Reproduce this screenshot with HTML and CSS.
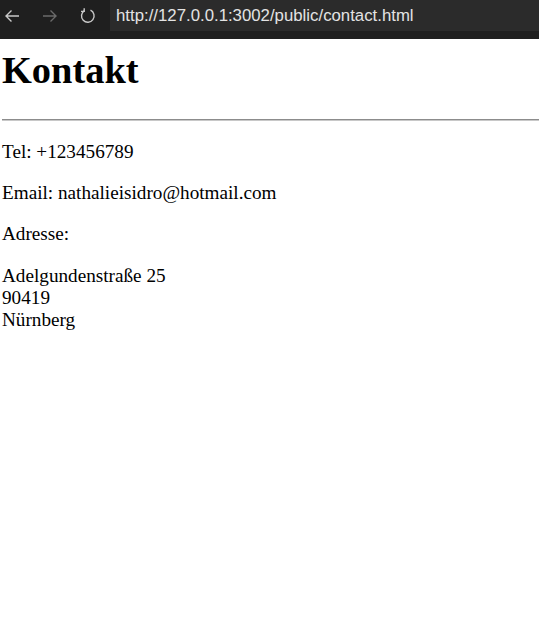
FILE: index.html
```html
<!DOCTYPE html>
<html lang="de">
<head>
<meta charset="utf-8">
<title>Kontakt</title>
<link rel="stylesheet" href="styles.css">
</head>
<body>
<header class="chrome">
  <div class="nav">
    <svg class="icon back" width="18" height="18" viewBox="0 0 18 18"><path d="M16 9H3M8.5 3.5L3 9l5.5 5.5" fill="none" stroke="currentColor" stroke-width="1.4"/></svg>
    <svg class="icon fwd" width="18" height="18" viewBox="0 0 18 18"><path d="M2 9h13M9.5 3.5L15 9l-5.5 5.5" fill="none" stroke="currentColor" stroke-width="1.4"/></svg>
    <svg class="icon reload" width="18" height="18" viewBox="0 0 18 18"><path d="M11.5 3.2A6.3 6.3 0 1 1 5.4 3.6" fill="none" stroke="currentColor" stroke-width="1.4"/><path d="M5.2 1.2v3.2H2" fill="none" stroke="currentColor" stroke-width="1.4"/></svg>
  </div>
  <div class="url">http://127.0.0.1:3002/public/contact.html</div>
</header>
<main class="content">
  <h1 class="title">Kontakt</h1>
  <hr class="rule">
  <p class="line">Tel: +123456789</p>
  <p class="line">Email: nathalieisidro@hotmail.com</p>
  <p class="line">Adresse:</p>
  <p class="line">Adelgundenstraße 25<br>90419<br>Nürnberg</p>
</main>
</body>
</html>
```
FILE: styles.css
```css
html, body {
  margin: 0;
  padding: 0;
  background: #ffffff;
}
.chrome {
  display: flex;
  height: 39px;
  background: #1f1f1f;
  align-items: flex-start;
}
.nav {
  display: flex;
  align-items: center;
  height: 31px;
  width: 110px;
  box-sizing: border-box;
  padding-left: 3px;
  gap: 20px;
}
.icon { display: block; }
.back { color: #c9c9c9; }
.fwd { color: #6b6b6b; }
.reload { color: #c9c9c9; }
.url {
  flex: 1;
  height: 31px;
  background: #2b2b2b;
  color: #e3e3e3;
  font-family: "Liberation Sans", Arial, sans-serif;
  font-size: 16.8px;
  line-height: 31px;
  padding-left: 6px;
  box-sizing: border-box;
}
.content {
  padding: 9px 0 0 2px;
  font-family: "Liberation Serif", "Times New Roman", serif;
  font-size: 19.2px;
  color: #000;
}
.title {
  font-size: 38.4px;
  font-weight: bold;
  margin: 0 0 27px;
}
.rule {
  margin: 0 0 20px;
  border: 0;
  border-top: 1px solid #8c8c8c;
  border-bottom: 1px solid #c8c8c8;
}
.line {
  margin: 19.2px 0;
}
```
